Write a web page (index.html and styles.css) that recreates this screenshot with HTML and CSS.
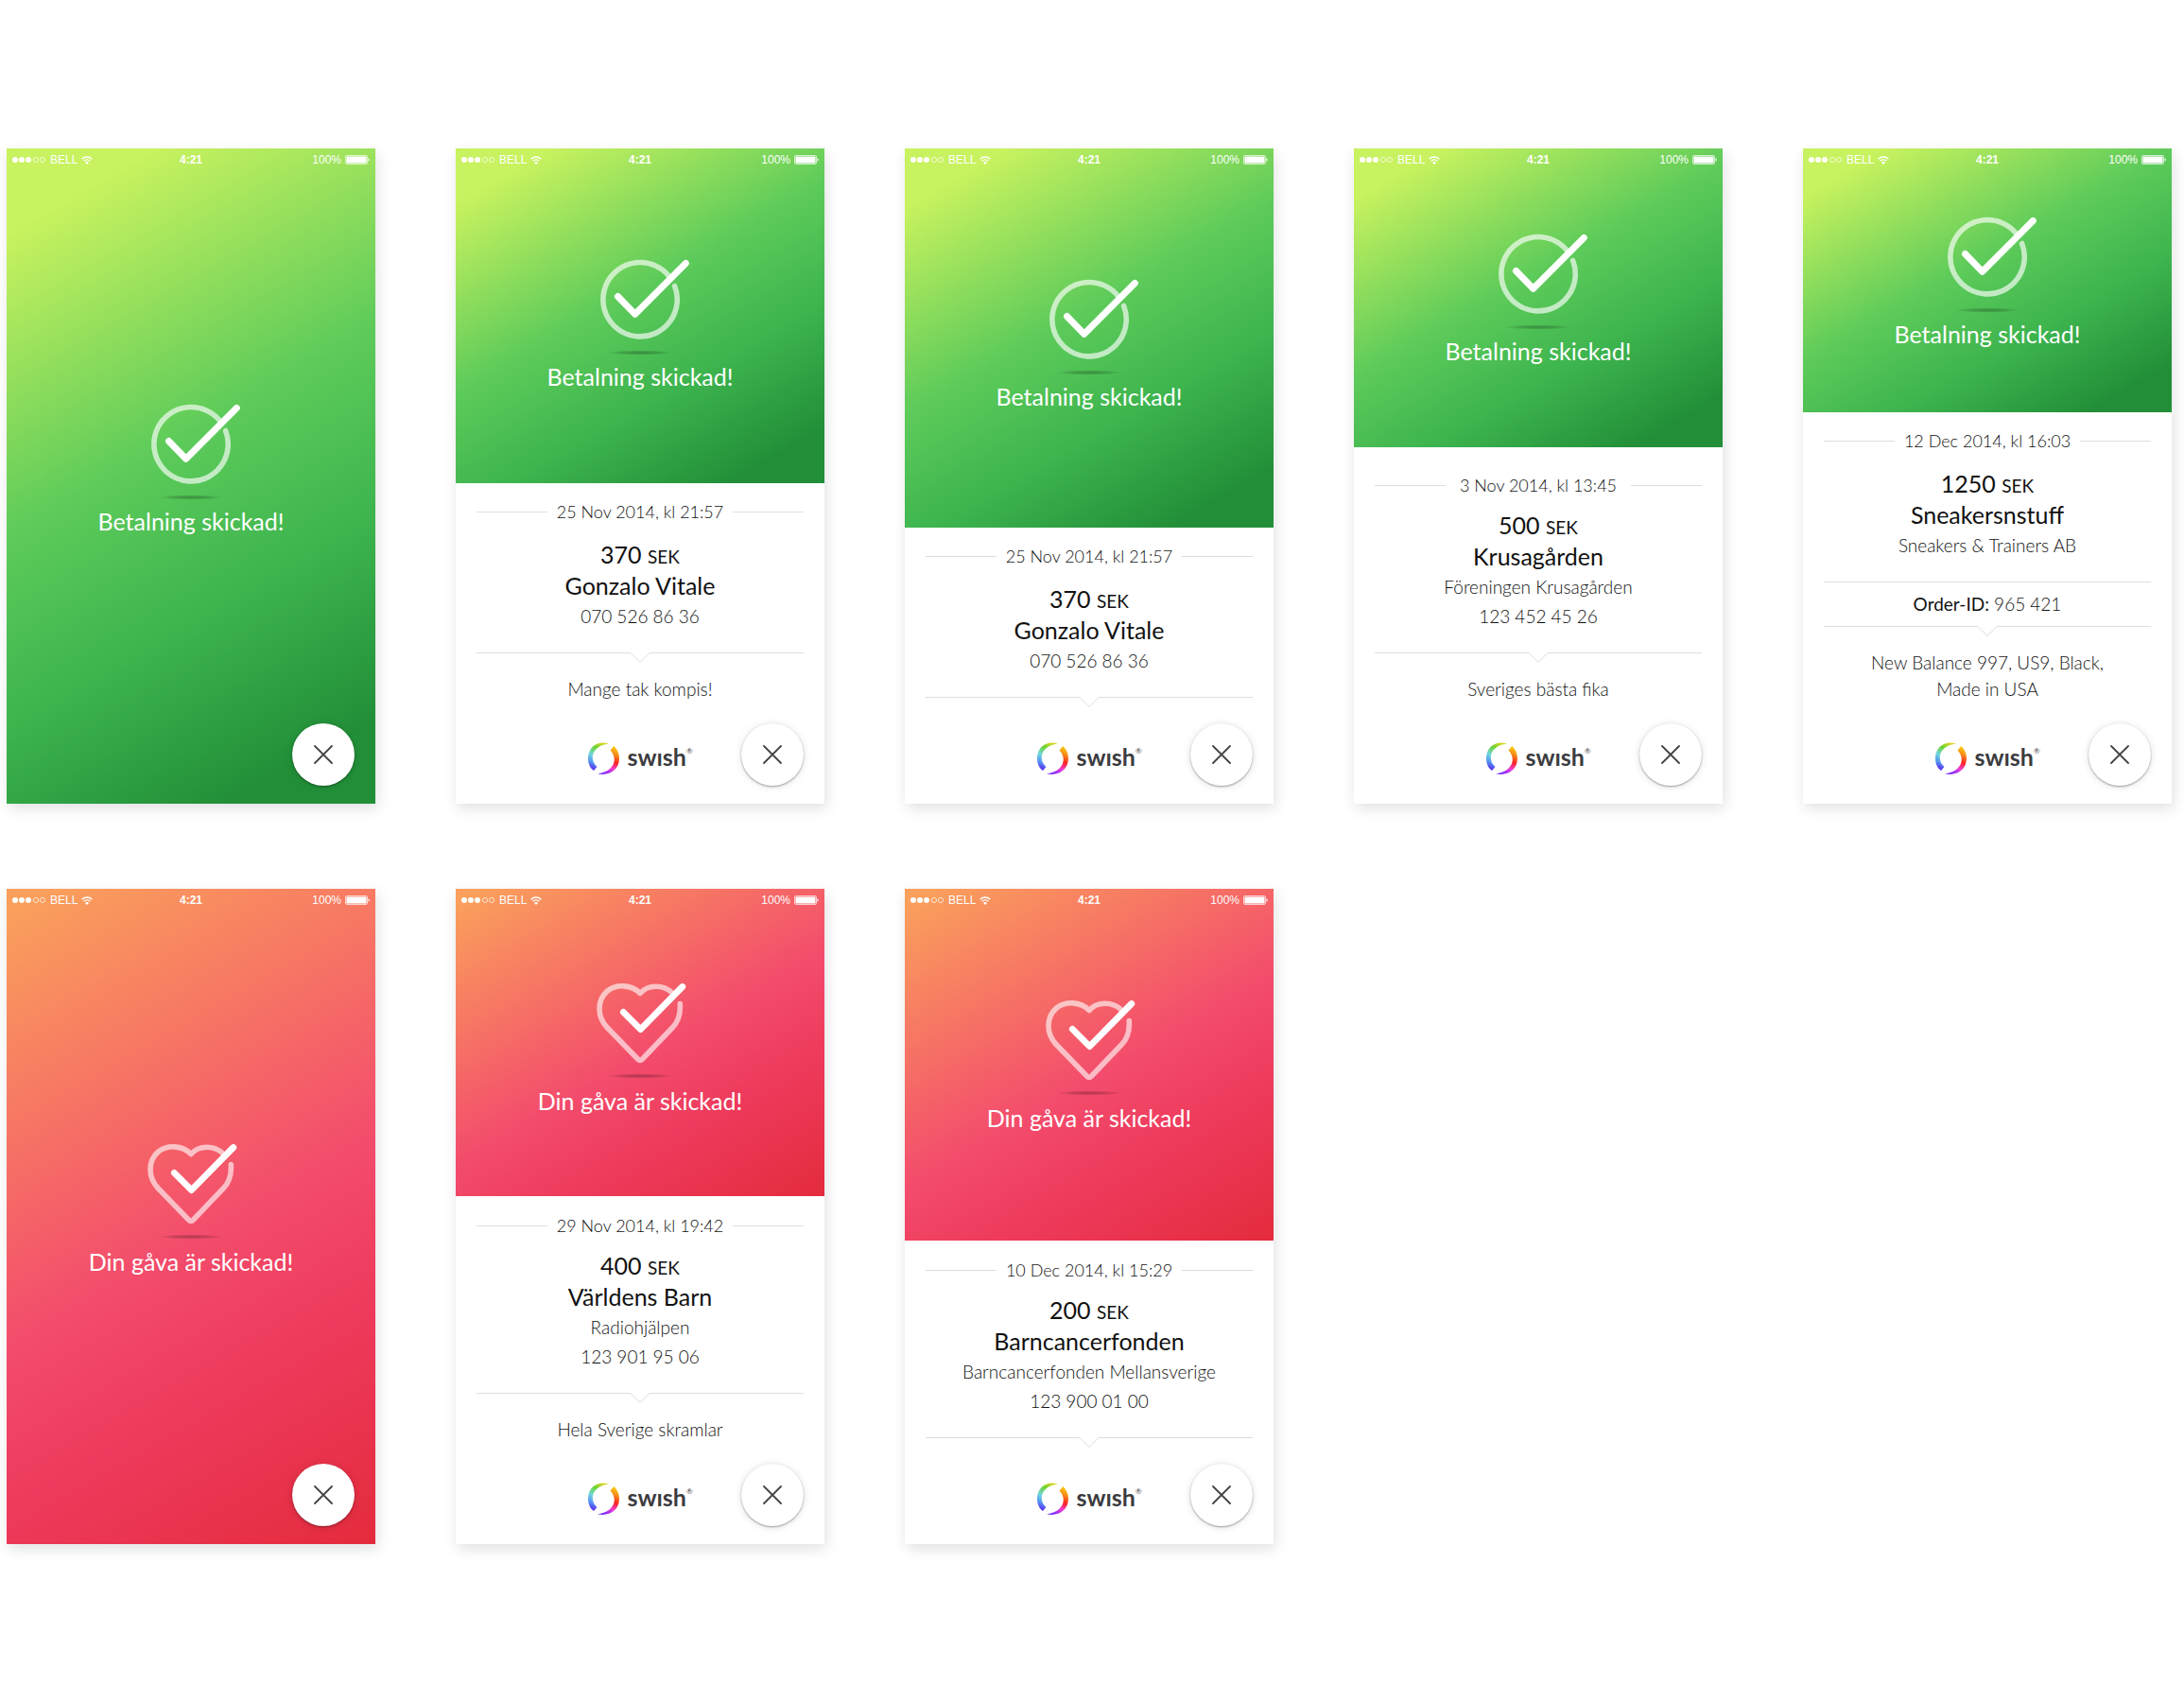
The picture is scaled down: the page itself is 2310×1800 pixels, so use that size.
FILE: index.html
```html
<!DOCTYPE html>
<html lang="sv">
<head>
<meta charset="utf-8">
<meta name="viewport" content="width=device-width, initial-scale=1">
<title>Swish – kvitton</title>
<link rel="stylesheet" href="styles.css">
</head>
<body>
<svg class="sprite" width="0" height="0" aria-hidden="true">
  <defs>
    <radialGradient id="shade"><stop offset="0" stop-color="#000" stop-opacity=".26"/><stop offset=".5" stop-color="#000" stop-opacity=".18"/><stop offset="1" stop-color="#000" stop-opacity="0"/></radialGradient>
    <linearGradient id="cool" x1=".6" y1="0" x2=".3" y2="1"><stop offset="0" stop-color="#d8d62a"/><stop offset=".2" stop-color="#6ed42c"/><stop offset=".5" stop-color="#6fd6dc"/><stop offset=".75" stop-color="#5596f2"/><stop offset="1" stop-color="#5a22ee"/></linearGradient>
    <linearGradient id="warm" x1=".7" y1="0" x2=".4" y2="1"><stop offset="0" stop-color="#f8cc10"/><stop offset=".25" stop-color="#f78a18"/><stop offset=".5" stop-color="#fa2420"/><stop offset=".75" stop-color="#f03cd4"/><stop offset="1" stop-color="#7a2bff"/></linearGradient>
    <symbol id="signal" viewBox="0 0 36 8"><g fill="#fff"><circle cx="3" cy="4" r="3"/><circle cx="10" cy="4" r="3"/><circle cx="17" cy="4" r="3"/></g><g fill="none" stroke="#fff" stroke-width=".8" opacity=".9"><circle cx="25" cy="4" r="2.6"/><circle cx="32" cy="4" r="2.6"/></g></symbol>
    <symbol id="wifi" viewBox="0 0 12 9"><g fill="none" stroke="#fff" stroke-width="1.4"><path d="M.6 3.2a7.8 7.8 0 0 1 10.8 0"/><path d="M2.6 5.3a5 5 0 0 1 6.8 0"/></g><path d="M6 9 4 6.9a3 3 0 0 1 4 0z" fill="#fff"/></symbol>
    <symbol id="battery" viewBox="0 0 26 10"><rect x=".5" y=".5" width="23" height="9" rx="1.5" fill="none" stroke="#fff" stroke-opacity=".7"/><rect x="1.5" y="1.5" width="21" height="7" rx=".5" fill="#fff"/><path d="M24.5 3.3q1.3.5 1.3 1.7t-1.3 1.7z" fill="#fff"/></symbol>
    <symbol id="paid" viewBox="0 0 104 104"><path d="M88.6 28.5A39.2 39.2 0 1 1 82.5 18" fill="none" stroke="#fff" stroke-opacity=".65" stroke-width="5.6" stroke-linecap="round"/><path d="M28.5 39.5 46.7 58.3 100.3 4.5" fill="none" stroke="#fff" stroke-width="7" stroke-linecap="round" stroke-linejoin="round"/><ellipse cx="52" cy="99" rx="35" ry="2.6" fill="url(#shade)"/></symbol>
    <symbol id="gift" viewBox="0 0 104 104"><path d="M86 10C76 1 61 1 52 10.5 43 1 27 .5 17.500 8 11 13.500 9 19.500 9 27c0 8 3 14 8 19.500L49.500 80q2.500 2.500 5 0L86.500 46.500c6-6 8.500-13 7.800-25" fill="none" stroke="#fff" stroke-opacity=".62" stroke-width="5.600" stroke-linecap="round" stroke-linejoin="round"/><path d="M34.300 30.300 52.500 48.700 96.800 3.500" fill="none" stroke="#fff" stroke-width="6.800" stroke-linecap="round" stroke-linejoin="round"/><ellipse cx="52" cy="98" rx="35" ry="2.600" fill="url(#shade)"/></symbol>
    <symbol id="ring" viewBox="0 0 36 36"><path d="M23 2.500C11-1.500 1 6 1 18c0 4 1 7.500 3 10.300L7 31l3.500-4C1 19 6 4 23 2.500z" fill="url(#cool)"/><path d="M28.300 5 24.500 9.500C33 18 29 32 11 34.200 22 37 34 31 34 18c0-5-2-9.500-5.700-13z" fill="url(#warm)"/></symbol>
    <symbol id="notch" viewBox="0 0 22 11"><path d="M0 .5H1L11 10.500 21 .5H22" fill="none" stroke="#dcdcdc"/></symbol>
    <symbol id="cross" viewBox="0 0 20 20"><path d="M1 1 19 19M19 1 1 19" stroke="#444" stroke-width="1.800" stroke-linecap="round"/></symbol>
  </defs>
</svg>

<main class="board">
  <article class="phone">
    <section class="hero hero-green">
      <div class="status"><span class="carrier"><svg class="i-signal"><use href="#signal"/></svg>BELL<svg class="i-wifi"><use href="#wifi"/></svg></span><time class="clock">4:21</time><span class="power">100%<svg class="i-battery"><use href="#battery"/></svg></span></div>
      <div class="result result-full"><svg class="mark"><use href="#paid"/></svg><h1>Betalning skickad!</h1></div>
    </section>
    <button class="close" type="button" aria-label="Stäng"><svg><use href="#cross"/></svg></button>
  </article>

  <article class="phone">
    <section class="hero hero-green">
      <div class="status"><span class="carrier"><svg class="i-signal"><use href="#signal"/></svg>BELL<svg class="i-wifi"><use href="#wifi"/></svg></span><time class="clock">4:21</time><span class="power">100%<svg class="i-battery"><use href="#battery"/></svg></span></div>
      <div class="result result-low"><svg class="mark"><use href="#paid"/></svg><h1>Betalning skickad!</h1></div>
    </section>
    <section class="details details-airy">
      <p class="date">25 Nov 2014, kl 21:57</p>
      <p class="amount">370 <small>SEK</small></p>
      <h2>Gonzalo Vitale</h2>
      <div class="info"><p>070 526 86 36</p></div>
      <div class="divider"><svg><use href="#notch"/></svg></div>
      <p class="message">Mange tak kompis!</p>
      <footer class="logo"><svg><use href="#ring"/></svg><b>swısh</b><sup>®</sup></footer>
    </section>
    <button class="close" type="button" aria-label="Stäng"><svg><use href="#cross"/></svg></button>
  </article>

  <article class="phone">
    <section class="hero hero-green">
      <div class="status"><span class="carrier"><svg class="i-signal"><use href="#signal"/></svg>BELL<svg class="i-wifi"><use href="#wifi"/></svg></span><time class="clock">4:21</time><span class="power">100%<svg class="i-battery"><use href="#battery"/></svg></span></div>
      <div class="result result-mid"><svg class="mark"><use href="#paid"/></svg><h1>Betalning skickad!</h1></div>
    </section>
    <section class="details details-airy">
      <p class="date">25 Nov 2014, kl 21:57</p>
      <p class="amount">370 <small>SEK</small></p>
      <h2>Gonzalo Vitale</h2>
      <div class="info"><p>070 526 86 36</p></div>
      <div class="divider"><svg><use href="#notch"/></svg></div>
      <footer class="logo"><svg><use href="#ring"/></svg><b>swısh</b><sup>®</sup></footer>
    </section>
    <button class="close" type="button" aria-label="Stäng"><svg><use href="#cross"/></svg></button>
  </article>

  <article class="phone">
    <section class="hero hero-green">
      <div class="status"><span class="carrier"><svg class="i-signal"><use href="#signal"/></svg>BELL<svg class="i-wifi"><use href="#wifi"/></svg></span><time class="clock">4:21</time><span class="power">100%<svg class="i-battery"><use href="#battery"/></svg></span></div>
      <div class="result"><svg class="mark"><use href="#paid"/></svg><h1>Betalning skickad!</h1></div>
    </section>
    <section class="details details-roomy">
      <p class="date">3 Nov 2014, kl 13:45</p>
      <p class="amount">500 <small>SEK</small></p>
      <h2>Krusagården</h2>
      <div class="info"><p>Föreningen Krusagården</p><p>123 452 45 26</p></div>
      <div class="divider"><svg><use href="#notch"/></svg></div>
      <p class="message">Sveriges bästa fika</p>
      <footer class="logo"><svg><use href="#ring"/></svg><b>swısh</b><sup>®</sup></footer>
    </section>
    <button class="close" type="button" aria-label="Stäng"><svg><use href="#cross"/></svg></button>
  </article>

  <article class="phone">
    <section class="hero hero-green">
      <div class="status"><span class="carrier"><svg class="i-signal"><use href="#signal"/></svg>BELL<svg class="i-wifi"><use href="#wifi"/></svg></span><time class="clock">4:21</time><span class="power">100%<svg class="i-battery"><use href="#battery"/></svg></span></div>
      <div class="result"><svg class="mark"><use href="#paid"/></svg><h1>Betalning skickad!</h1></div>
    </section>
    <section class="details details-airy">
      <p class="date">12 Dec 2014, kl 16:03</p>
      <p class="amount">1250 <small>SEK</small></p>
      <h2>Sneakersnstuff</h2>
      <div class="info"><p>Sneakers &amp; Trainers AB</p></div>
      <p class="order"><strong>Order-ID:</strong> 965 421</p>
      <div class="divider"><svg><use href="#notch"/></svg></div>
      <p class="message">New Balance 997, US9, Black,<br>Made in USA</p>
      <footer class="logo"><svg><use href="#ring"/></svg><b>swısh</b><sup>®</sup></footer>
    </section>
    <button class="close" type="button" aria-label="Stäng"><svg><use href="#cross"/></svg></button>
  </article>

  <article class="phone">
    <section class="hero hero-red">
      <div class="status"><span class="carrier"><svg class="i-signal"><use href="#signal"/></svg>BELL<svg class="i-wifi"><use href="#wifi"/></svg></span><time class="clock">4:21</time><span class="power">100%<svg class="i-battery"><use href="#battery"/></svg></span></div>
      <div class="result result-full"><svg class="mark"><use href="#gift"/></svg><h1>Din gåva är skickad!</h1></div>
    </section>
    <button class="close" type="button" aria-label="Stäng"><svg><use href="#cross"/></svg></button>
  </article>

  <article class="phone">
    <section class="hero hero-red">
      <div class="status"><span class="carrier"><svg class="i-signal"><use href="#signal"/></svg>BELL<svg class="i-wifi"><use href="#wifi"/></svg></span><time class="clock">4:21</time><span class="power">100%<svg class="i-battery"><use href="#battery"/></svg></span></div>
      <div class="result result-mid"><svg class="mark"><use href="#gift"/></svg><h1>Din gåva är skickad!</h1></div>
    </section>
    <section class="details">
      <p class="date">29 Nov 2014, kl 19:42</p>
      <p class="amount">400 <small>SEK</small></p>
      <h2>Världens Barn</h2>
      <div class="info"><p>Radiohjälpen</p><p>123 901 95 06</p></div>
      <div class="divider"><svg><use href="#notch"/></svg></div>
      <p class="message">Hela Sverige skramlar</p>
      <footer class="logo"><svg><use href="#ring"/></svg><b>swısh</b><sup>®</sup></footer>
    </section>
    <button class="close" type="button" aria-label="Stäng"><svg><use href="#cross"/></svg></button>
  </article>

  <article class="phone">
    <section class="hero hero-red">
      <div class="status"><span class="carrier"><svg class="i-signal"><use href="#signal"/></svg>BELL<svg class="i-wifi"><use href="#wifi"/></svg></span><time class="clock">4:21</time><span class="power">100%<svg class="i-battery"><use href="#battery"/></svg></span></div>
      <div class="result"><svg class="mark"><use href="#gift"/></svg><h1>Din gåva är skickad!</h1></div>
    </section>
    <section class="details">
      <p class="date">10 Dec 2014, kl 15:29</p>
      <p class="amount">200 <small>SEK</small></p>
      <h2>Barncancerfonden</h2>
      <div class="info"><p>Barncancerfonden Mellansverige</p><p>123 900 01 00</p></div>
      <div class="divider"><svg><use href="#notch"/></svg></div>
      <footer class="logo"><svg><use href="#ring"/></svg><b>swısh</b><sup>®</sup></footer>
    </section>
    <button class="close" type="button" aria-label="Stäng"><svg><use href="#cross"/></svg></button>
  </article>
</main>
</body>
</html>
```

FILE: styles.css
```css
* { box-sizing: border-box; }

body {
  margin: 0;
  background: #fff;
  color: #111;
  font: 300 19px/31px Lato, "Open Sans", sans-serif;
}

h1, h2, p { margin: 0; font-weight: inherit; }
svg { display: block; }
.sprite { position: absolute; }

.board {
  display: grid;
  grid-template-columns: repeat(5, minmax(0, 1fr));
  gap: 90px 85px;
  padding: 157px 13px 167px 7px;
}

.phone {
  position: relative;
  display: flex;
  flex-direction: column;
  aspect-ratio: 390 / 693;
  background: #fff;
  box-shadow: 2px 5px 14px rgba(0, 0, 0, .12);
}

/* Coloured top */
.hero {
  flex: 1;
  display: flex;
  flex-direction: column;
  color: #fff;
}
.hero-green { background: linear-gradient(150deg, #c8f25f 10%, #5dcb5a 45%, #3db44e 67%, #228f38 90%); }
.hero-red { background: linear-gradient(150deg, #fa9f5c 3%, #f34c6c 53%, #ee3a5c 72%, #e42b3d 100%); }

.status {
  display: grid;
  grid-template-columns: 1fr auto 1fr;
  align-items: center;
  height: 24px;
  padding: 0 6px;
  font: 400 12px/24px "Liberation Sans", Arial, sans-serif;
}
.carrier, .power { display: flex; align-items: center; }
.carrier { gap: 4px; }
.power { gap: 4px; justify-content: flex-end; }
.clock { font-weight: 700; }
.i-signal { width: 36px; height: 8px; }
.i-wifi { width: 12px; height: 9px; }
.i-battery { width: 26px; height: 10px; }

.result {
  flex: 1;
  display: flex;
  flex-direction: column;
  align-items: center;
  justify-content: center;
  gap: 4px;
  padding-bottom: 20px;
}
.result-full { padding-bottom: 37px; }
.result-mid { padding-bottom: 10px; }
.result-low { padding-bottom: 4px; }
.mark { width: 104px; height: 104px; }
.result h1 { font-size: 25px; font-weight: 400; line-height: 32px; }

/* Receipt */
.details {
  padding: 17px 22px 30px;
  text-align: center;
}
.details-airy { padding-top: 16px; }
.details-roomy { padding-top: 26px; }

.date {
  display: flex;
  align-items: center;
  justify-content: space-between;
  margin-bottom: 13px;
  font-size: 18px;
  line-height: 28px;
  white-space: nowrap;
}
.date::before, .date::after {
  content: "";
  width: 75px;
  height: 1px;
  background: #dedede;
}
.details-airy .date { margin-bottom: 16px; }

.amount, h2 { font-size: 25px; font-weight: 400; }
.amount small { font-size: 19px; }
.info { padding: 1px 0 23px; }

.order {
  padding: 8px 0;
  border-top: 1px solid #dedede;
  line-height: 30px;
}
.order strong { font-weight: 400; }

.divider { display: flex; height: 11px; }
.divider::before, .divider::after {
  content: "";
  flex: 1;
  height: 1px;
  background: #dedede;
}
.divider svg { width: 22px; height: 11px; }

.message { padding: 14px 0 5px; line-height: 28px; }

.logo {
  display: flex;
  justify-content: center;
  height: 36px;
  margin-top: 36px;
  color: #3c3c3f;
}
.logo svg { width: 36px; height: 36px; margin-right: 6px; }
.logo b { font-size: 25px; font-weight: 700; line-height: 32px; }
.logo sup { font-size: 8px; line-height: 20px; font-weight: 400; }

.close {
  position: absolute;
  right: 22px;
  bottom: 19px;
  display: grid;
  place-items: center;
  width: 66px;
  height: 66px;
  padding: 0;
  border: 0;
  border-radius: 50%;
  background: #fff;
  box-shadow: 0 1px 2px rgba(0, 0, 0, .35), 0 1px 8px rgba(0, 0, 0, .12);
  cursor: pointer;
}
.close svg { width: 20px; height: 20px; }
```
